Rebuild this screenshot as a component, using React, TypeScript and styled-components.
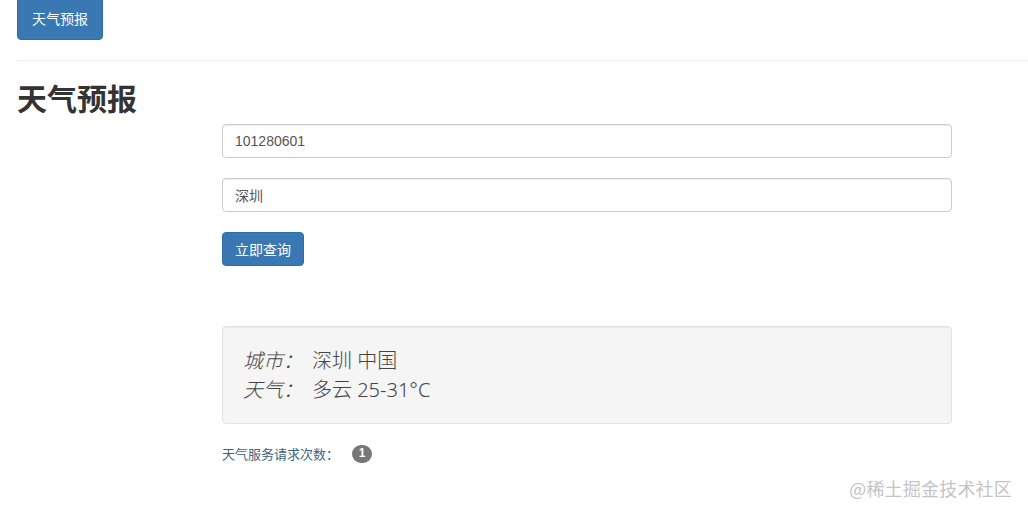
import React from "react";
import styled, { createGlobalStyle } from "styled-components";

const Global = createGlobalStyle`
  html, body { margin: 0; padding: 0; background: #fff; }
  body {
    font-family: "Helvetica Neue", "Liberation Sans", "Noto Sans CJK SC", sans-serif;
    color: #333;
    font-size: 14px;
    line-height: 1.42857;
  }
  * { box-sizing: border-box; }
`;

const Page = styled.div`
  position: relative;
  width: 1028px;
  height: 515px;
  overflow: hidden;
  padding-left: 17px;
`;

const Btn = styled.button<{ $h?: number; $w?: number }>`
  display: flex;
  align-items: center;
  justify-content: center;
  width: ${(p) => p.$w ?? 82}px;
  height: ${(p) => p.$h ?? 34}px;
  padding: 0;
  background: #3a78b3;
  border: 1px solid #2e6da4;
  border-radius: 4px;
  color: #fff;
  font-family: "Noto Sans CJK SC", sans-serif;
  font-size: 14px;
  cursor: pointer;
`;

const NavBtn = styled(Btn)`
  margin-top: -4px;
`;

const Rule = styled.hr`
  margin: 20px 0 0;
  border: 0;
  border-top: 1px solid #eee;
`;

const Title = styled.h2`
  margin: 20px 0 10px;
  font-family: "Noto Sans CJK SC", sans-serif;
  font-size: 30px;
  font-weight: 700;
  line-height: 33px;
  color: #333;
`;

const Form = styled.div`
  margin-left: 205px;
  width: 730px;
  display: flex;
  flex-direction: column;
  align-items: flex-start;
`;

const Input = styled.input`
  width: 100%;
  height: 34px;
  padding: 6px 12px;
  margin-bottom: 20px;
  border: 1px solid #ccc;
  border-radius: 4px;
  box-shadow: inset 0 1px 1px rgba(0, 0, 0, 0.075);
  font-family: "Liberation Sans", "Noto Sans CJK SC", sans-serif;
  font-size: 14px;
  color: #555;
  outline: none;
`;

const Well = styled.div`
  width: 100%;
  margin-top: 60px;
  margin-bottom: 20px;
  padding: 19px 20px;
  background: #f5f5f5;
  border: 1px solid #e3e3e3;
  border-radius: 4px;
  box-shadow: inset 0 1px 1px rgba(0, 0, 0, 0.05);
`;

const Line = styled.div`
  display: flex;
  align-items: baseline;
  font-family: "Noto Sans", "Noto Sans CJK SC", sans-serif;
  font-size: 20px;
  line-height: 29px;
  color: #444;
  font-weight: 300;
`;

const Label = styled.em`
  font-style: italic;
  width: 69px;
  color: #444;
`;

const Footer = styled.div`
  display: flex;
  align-items: center;
  height: 20px;
  font-family: "Noto Sans CJK SC", sans-serif;
  font-size: 13px;
  color: #3d6480;
`;

const Badge = styled.span`
  display: inline-flex;
  align-items: center;
  justify-content: center;
  margin-left: 13px;
  min-width: 20px;
  height: 18px;
  padding: 0 6px;
  border-radius: 10px;
  background: #777;
  color: #fff;
  font-family: "Liberation Sans", sans-serif;
  font-size: 12px;
  font-weight: 700;
`;

const Watermark = styled.div`
  position: absolute;
  right: 16px;
  top: 476px;
  font-family: "Noto Sans CJK SC", sans-serif;
  font-size: 18px;
  color: #c4c4c4;
  letter-spacing: 0.2px;
`;

export default function App() {
  return (
    <>
      <Global />
      <Page>
        <NavBtn $w={86} $h={44}>天气预报</NavBtn>
        <Rule />
        <Title>天气预报</Title>
        <Form>
          <Input defaultValue="101280601" />
          <Input defaultValue="深圳" />
          <Btn $w={82} $h={34}>立即查询</Btn>
          <Well>
            <Line>
              <Label>城市：</Label>
              <span>深圳 中国</span>
            </Line>
            <Line>
              <Label>天气：</Label>
              <span>多云 25-31°C</span>
            </Line>
          </Well>
          <Footer>
            天气服务请求次数：<Badge>1</Badge>
          </Footer>
        </Form>
        <Watermark>@稀土掘金技术社区</Watermark>
      </Page>
    </>
  );
}
